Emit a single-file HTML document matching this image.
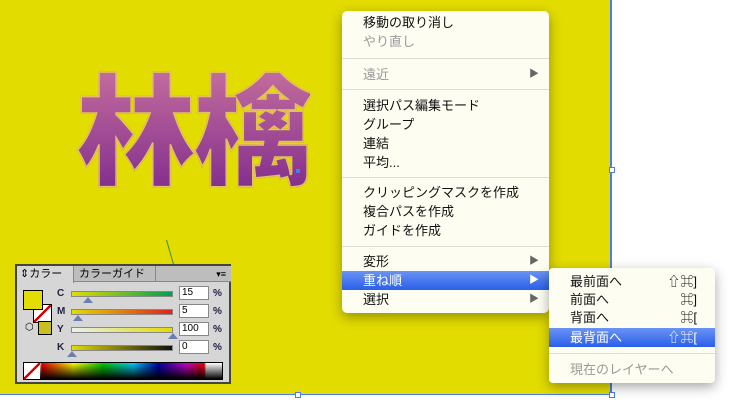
<!DOCTYPE html>
<html><head><meta charset="utf-8"><style>
*{margin:0;padding:0;box-sizing:border-box}
body{width:730px;height:400px;overflow:hidden;background:#fff;position:relative;font-family:"Liberation Sans","Noto Sans CJK JP",sans-serif}
.bg{position:absolute;left:0;top:0;width:612px;height:395px;background:#e2dc00;border-right:2px solid #4a7df0;border-bottom:1px solid #4a7df0}
.h{position:absolute;width:6px;height:6px;border:1px solid #4a7df0;background:#fff}
.menu{position:absolute;background:#fdfdf2;border-radius:5px;box-shadow:0 4px 12px rgba(0,0,0,.35);font-size:13px;color:#111}
.it{position:absolute;left:0;right:0;height:19px;line-height:19px;padding-left:21px;white-space:nowrap}
.dis{color:#999}
.sel{background:linear-gradient(#6a93f5,#2a5fe8);color:#fff}
.sep{position:absolute;left:0;right:0;height:1px;background:#dcdcd0}
.ar{position:absolute;right:10px;top:0;font-size:10px;color:#666}
.sel .ar{color:#fff}
.sc{position:absolute;right:18px;top:0}
.big{position:absolute;left:76px;top:48px;font-family:"Noto Sans CJK JP",sans-serif;font-weight:900;font-size:120px;letter-spacing:-3px;line-height:150px;background:linear-gradient(#cf78a0,#7e2a8c);-webkit-background-clip:text;color:transparent;-webkit-text-stroke:1.5px #e2c060}
.panel{position:absolute;left:15px;top:264px;width:216px;height:120px;background:#d6d6d6;border:2px solid #444;font-size:10px}
.bar{position:absolute;left:54px;width:102px;height:6px;border:1px solid #888}
.inp{position:absolute;left:162px;width:30px;height:14px;background:#fff;border:1px solid #888;font-size:10px;line-height:12px;padding-left:2px}
.lb{position:absolute;left:40px;font-weight:bold;color:#224}
.pc{position:absolute;left:196px;color:#224;font-weight:bold}
.tri{position:absolute;width:0;height:0;border-left:5px solid transparent;border-right:5px solid transparent;border-bottom:6px solid #6a80b0}
</style></head><body>
<div class="bg"></div>
<div class="h" style="left:609px;top:167px"></div>
<div class="h" style="left:609px;top:392px"></div>
<div class="h" style="left:295px;top:392px"></div>
<div class="big">林檎</div>
<div style="position:absolute;left:296px;top:169px;width:4px;height:4px;background:#4a7df0"></div>
<div style="position:absolute;left:166px;top:240px;width:1px;height:50px;background:#3a8a3a;transform:rotate(-16deg);transform-origin:top"></div>

<div class="menu" style="left:342px;top:11px;width:207px;height:302px">
<div class="it" style="top:2px">移動の取り消し</div>
<div class="it dis" style="top:21px">やり直し</div>
<div class="sep" style="top:47px"></div>
<div class="it dis" style="top:54px">遠近<span class="ar">▶</span></div>
<div class="sep" style="top:78px"></div>
<div class="it" style="top:85px">選択パス編集モード</div>
<div class="it" style="top:104px">グループ</div>
<div class="it" style="top:123px">連結</div>
<div class="it" style="top:142px">平均...</div>
<div class="sep" style="top:166px"></div>
<div class="it" style="top:172px">クリッピングマスクを作成</div>
<div class="it" style="top:191px">複合パスを作成</div>
<div class="it" style="top:210px">ガイドを作成</div>
<div class="sep" style="top:235px"></div>
<div class="it" style="top:241px">変形<span class="ar">▶</span></div>
<div class="it sel" style="top:260px">重ね順<span class="ar">▶</span></div>
<div class="it" style="top:279px">選択<span class="ar">▶</span></div>
</div>

<div class="menu" style="left:549px;top:268px;width:166px;height:115px;border-radius:4px">
<div class="it" style="top:4px">最前面へ<span class="sc">⇧⌘]</span></div>
<div class="it" style="top:22px">前面へ<span class="sc">⌘]</span></div>
<div class="it" style="top:40px">背面へ<span class="sc">⌘[</span></div>
<div class="it sel" style="top:60px">最背面へ<span class="sc">⇧⌘[</span></div>
<div class="sep" style="top:85px"></div>
<div class="it dis" style="top:92px">現在のレイヤーへ</div>
</div>

<div class="panel">
<div style="position:absolute;left:0;top:0;width:214px;height:16px;background:#bdbdbd;border-bottom:1px solid #888"></div>
<div style="position:absolute;left:0;top:0;width:57px;height:17px;background:#d6d6d6;border-right:1px solid #888;font-size:11px;line-height:16px;padding-left:3px">⇕カラー</div>
<div style="position:absolute;left:62px;top:0;font-size:11px;line-height:16px">カラーガイド</div>
<div style="position:absolute;left:138px;top:0;width:1px;height:16px;background:#888"></div>
<div style="position:absolute;right:3px;top:0;font-size:9px;line-height:16px">▾≡</div>
<div style="position:absolute;left:16px;top:38px;width:19px;height:19px;background:#fff;border:1px solid #000;background:linear-gradient(135deg,#fff 45%,#d00 45%,#d00 55%,#fff 55%)"></div>
<div style="position:absolute;left:6px;top:24px;width:20px;height:20px;background:#e2dc00;border:1px solid #000"></div>
<div style="position:absolute;left:8px;top:56px;font-size:10px">⬡</div>
<div style="position:absolute;left:21px;top:55px;width:14px;height:14px;background:#c8c020;border:1px solid #000"></div>
<div class="lb" style="top:22px">C</div><div class="bar" style="top:25px;background:linear-gradient(90deg,#e2dc00,#00a050)"></div><div class="tri" style="left:66px;top:31px"></div><div class="inp" style="top:20px">15</div><div class="pc" style="top:22px">%</div>
<div class="lb" style="top:40px">M</div><div class="bar" style="top:43px;background:linear-gradient(90deg,#e2dc00,#e02020)"></div><div class="tri" style="left:56px;top:49px"></div><div class="inp" style="top:38px">5</div><div class="pc" style="top:40px">%</div>
<div class="lb" style="top:58px">Y</div><div class="bar" style="top:61px;background:linear-gradient(90deg,#e8f0f0,#e2dc00)"></div><div class="tri" style="left:151px;top:67px"></div><div class="inp" style="top:56px">100</div><div class="pc" style="top:58px">%</div>
<div class="lb" style="top:76px">K</div><div class="bar" style="top:79px;background:linear-gradient(90deg,#e2dc00,#111)"></div><div class="tri" style="left:50px;top:85px"></div><div class="inp" style="top:74px">0</div><div class="pc" style="top:76px">%</div>
<div style="position:absolute;left:6px;top:96px;width:200px;height:18px;border:1px solid #000;background:linear-gradient(#fff0,#000),linear-gradient(90deg,#fff 0,#fff 8%,#e00 9%,#ff0 25%,#0c0 40%,#0cf 55%,#00a 68%,#c0c 82%,#e00 91%,#fff 92%)"></div>
<div style="position:absolute;left:7px;top:97px;width:16px;height:16px;background:linear-gradient(135deg,#fff 45%,#d00 45%,#d00 55%,#fff 55%)"></div>
</div>
</body></html>
